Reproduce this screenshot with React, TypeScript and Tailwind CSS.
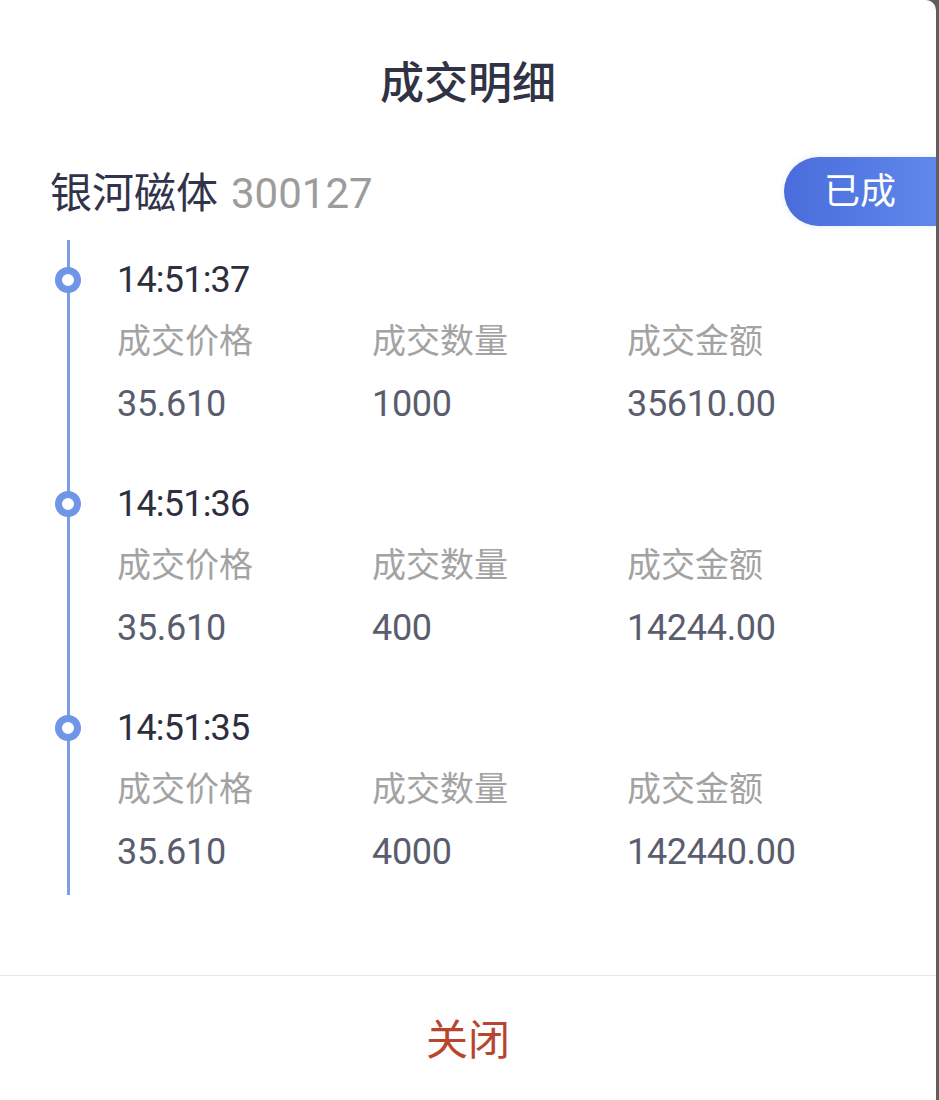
import React from "react";

const FONT = { fontFamily: '"Roboto", "Noto Sans CJK SC", sans-serif' };

const trades = [
  { time: "14:51:37", price: "35.610", qty: "1000", amount: "35610.00" },
  { time: "14:51:36", price: "35.610", qty: "400", amount: "14244.00" },
  { time: "14:51:35", price: "35.610", qty: "4000", amount: "142440.00" },
];

function TradeItem({ time, price, qty, amount, first }: { time: string; price: string; qty: string; amount: string; first?: boolean }) {
  return (
    <div className={first ? "pl-[47px] pt-[20px]" : "pl-[47px] pt-[67px]"}>
      {/* time + dot */}
      <div className="relative h-[40px] flex items-center text-[36px] tracking-[-0.8px] text-[#2c2f3e]">
        <span className="absolute left-[-62px] top-[7px] w-[26px] h-[26px] rounded-full border-[7px] border-[#6f95e6] bg-white" />
        {time}
      </div>
      <div className="mt-[16px] grid grid-cols-[255px_255px_1fr] h-[40px] items-center text-[34px] text-[#a3a3a3]">
        <span>成交价格</span>
        <span>成交数量</span>
        <span>成交金额</span>
      </div>
      <div className="mt-[21px] grid grid-cols-[255px_255px_1fr] h-[40px] items-center text-[36px] tracking-[-0.3px] text-[#5a5d6d]">
        <span>{price}</span>
        <span>{qty}</span>
        <span>{amount}</span>
      </div>
    </div>
  );
}

export default function App() {
  return (
    <div className="w-[939px] h-[1100px] bg-[#5f5f5f] overflow-hidden" style={FONT}>
      <div className="w-[936px] h-[1100px] bg-white rounded-tr-[10px] flex flex-col">
        {/* header */}
        <div className="pt-[53px] h-[114px] text-center text-[44px] leading-[62px] font-medium text-[#303344]">
          成交明细
        </div>

        {/* stock row */}
        <div className="mt-[43px] h-[69px] flex items-center">
          <div className="pl-[50px] pt-[4px] flex items-baseline gap-[13px]">
            <span className="text-[42px] text-[#30334a]">银河磁体</span>
            <span className="text-[42px] text-[#9c9c9c]">300127</span>
          </div>
          <div className="ml-auto h-[69px] w-[152px] rounded-l-full bg-linear-to-r from-[#4a6cdb] to-[#5f88eb] flex items-center justify-center text-white text-[36px] shadow-[0_0_6px_rgba(74,108,219,0.15)]">
            已成
          </div>
        </div>

        {/* timeline */}
        <div className="mt-[14px] ml-[67px] border-l-[3px] border-[#7b9fe2] pb-[30px]">
          {trades.map((t, i) => (
            <TradeItem key={t.time} {...t} first={i === 0} />
          ))}
        </div>

        {/* footer */}
        <div className="mt-auto border-t border-[#e6e6e6] h-[125px] pt-[4px] flex items-center justify-center bg-[#fefefe]">
          <button className="text-[42px] text-[#b6462f]">关闭</button>
        </div>
      </div>
    </div>
  );
}
